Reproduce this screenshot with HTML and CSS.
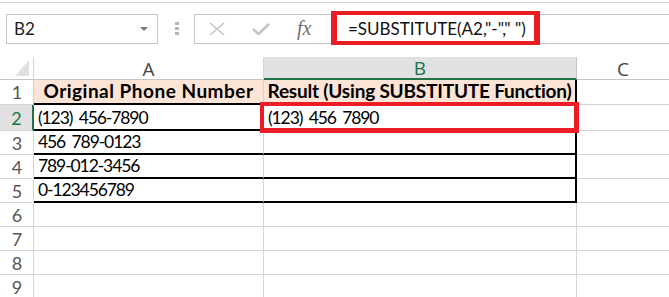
FILE: index.html
```html
<!DOCTYPE html>
<html>
<head>
<meta charset="utf-8">
<link rel="stylesheet" href="styles.css">
</head>
<body>
<div class="app">
  <div class="topline"></div>
  <div class="fbar">
    <div class="namebox"><span class="nb-text">B2</span><span class="nb-arrow"></span></div>
    <div class="dots"><i></i><i></i><i></i></div>
    <div class="btns">
      <svg class="ico-x" width="16" height="14" viewBox="0 0 16 14"><path d="M1 1 L15 13 M15 1 L1 13" stroke="#c4c4c4" stroke-width="1.6" fill="none"/></svg>
      <svg class="ico-v" width="18" height="12" viewBox="0 0 18 12"><path d="M1 6 L6.5 11 L17 1" stroke="#c4c4c4" stroke-width="2.6" fill="none"/></svg>
      <span class="fx">fx</span>
    </div>
    <div class="formula">=SUBSTITUTE(A2,"-"," ")</div>
    <div class="frest"></div>
  </div>
  <div class="sheet">
    <div class="corner"><span class="tri"></span></div>
    <div class="ch">A</div>
    <div class="ch sel">B</div>
    <div class="ch last">C</div>

    <div class="rh">1</div>
    <div class="c head head-a bl">Original Phone Number</div>
    <div class="c head head-b bl br">Result (Using SUBSTITUTE Function)</div>
    <div class="c last"></div>

    <div class="rh sel">2</div>
    <div class="c bl">(123) 456-7890</div>
    <div class="c bl br target">(123) 456 7890<span class="redbox"></span></div>
    <div class="c last"></div>

    <div class="rh">3</div>
    <div class="c bl">456 789-0123</div>
    <div class="c bl br"></div>
    <div class="c last"></div>

    <div class="rh">4</div>
    <div class="c bl">789-012-3456</div>
    <div class="c bl br"></div>
    <div class="c last"></div>

    <div class="rh">5</div>
    <div class="c bl">0-123456789</div>
    <div class="c bl br"></div>
    <div class="c last"></div>

    <div class="rh">6</div>
    <div class="c"></div>
    <div class="c"></div>
    <div class="c last"></div>

    <div class="rh">7</div>
    <div class="c"></div>
    <div class="c"></div>
    <div class="c last"></div>

    <div class="rh">8</div>
    <div class="c"></div>
    <div class="c"></div>
    <div class="c last"></div>

    <div class="rh">9</div>
    <div class="c"></div>
    <div class="c"></div>
    <div class="c last"></div>
  </div>
</div>
</body>
</html>
```

FILE: styles.css
```css
* { box-sizing: border-box; }
html, body { margin: 0; padding: 0; background: #fff; }
body { width: 669px; height: 297px; overflow: hidden; font-family: Lato, "Liberation Sans", sans-serif; color: #000; }

.topline { height: 3px; border-bottom: 1px solid #d4d4d4; }

.fbar { display: flex; align-items: center; height: 33px; margin-top: 9px; }

.namebox { margin-left: 6px; width: 152px; height: 30px; border: 1px solid #c6c6c6; display: flex; align-items: center; justify-content: space-between; padding: 0 9px 0 7px; }
.nb-text { font-size: 17px; color: #222; }
.nb-arrow { width: 0; height: 0; border-left: 4px solid transparent; border-right: 4px solid transparent; border-top: 4px solid #777; }

.dots { margin-left: 17px; width: 4px; display: flex; flex-direction: column; gap: 2px; }
.dots i { display: block; width: 4px; height: 3px; background: #b4b4b4; }

.btns { margin-left: 15px; width: 138px; height: 30px; border: 1px solid #c6c6c6; display: flex; align-items: center; padding-left: 14px; }
.ico-x { margin-top: 1px; }
.ico-v { margin-left: 27px; margin-top: 1px; }
.fx { margin-left: 27px; font-family: "Liberation Serif", serif; font-style: italic; font-size: 20px; color: #6f6f6f; }

.formula { margin-left: -1px; margin-top: -1px; width: 209px; height: 34px; border-style: solid; border-color: #ec1c24; border-width: 4px 6px 4px 6px; font-size: 17px; padding-left: 11px; display: flex; align-items: center; white-space: nowrap; color: #111; }
.frest { flex: 1; height: 30px; border-top: 1px solid #c6c6c6; border-bottom: 1px solid #c6c6c6; }

.sheet { margin-top: 12px; display: grid; grid-template-columns: 34px 230px 313px 1fr; grid-template-rows: 23px 25px 26px 24px 24px 24px 24px 24px 24px 24px; }

.corner { border-right: 1px solid #d4d4d4; border-bottom: 1px solid #c6c6c6; position: relative; }
.tri { position: absolute; right: 4px; bottom: 3px; width: 0; height: 0; border-left: 14px solid transparent; border-bottom: 16px solid #dfdfdf; }

.ch { border-right: 1px solid #d4d4d4; border-bottom: 1px solid #c6c6c6; display: flex; align-items: center; justify-content: center; font-size: 19px; color: #444; font-family: "Open Sans", sans-serif; padding-top: 1px; }
.ch.sel { background: #e1e1e1; color: #217346; border-bottom: 2px solid #217346; border-right-color: #c6c6c6; }
.ch.last { border-right: none; }

.rh { border-right: 1px solid #d4d4d4; border-bottom: 1px solid #d4d4d4; display: flex; align-items: center; justify-content: center; font-size: 18px; color: #555; padding-left: 1px; }
.rh.sel { background: #e1e1e1; color: #217346; border-right: 2px solid #217346; }

.c { border-right: 1px solid #d4d4d4; border-bottom: 1px solid #d4d4d4; display: flex; align-items: flex-end; padding: 0 0 1px 4px; font-size: 17.5px; letter-spacing: -1.1px; word-spacing: 3px; white-space: pre; }
.c.last { border-right: none; }
.c.bl { border-bottom: 2px solid #000; }
.c.br { border-right: 2px solid #000; }
.c.head { background: #fce4d6; font-weight: bold; justify-content: center; padding-left: 0; font-size: 19px; letter-spacing: 0; word-spacing: 0; }
.c.head-a { letter-spacing: 0.5px; }
.c.head-b { letter-spacing: -0.2px; }
.target { position: relative; }
.redbox { position: absolute; left: -4px; top: -3px; right: -4px; bottom: -4px; border-style: solid; border-color: #ec1c24; border-width: 4px 5px 5px 4px; pointer-events: none; }
```
